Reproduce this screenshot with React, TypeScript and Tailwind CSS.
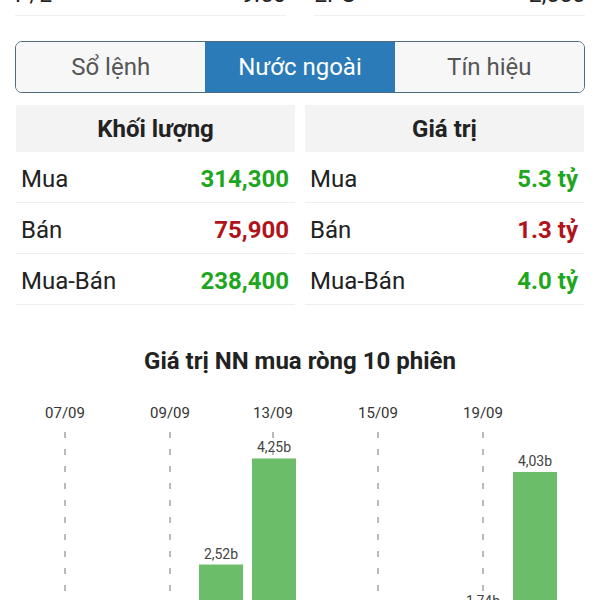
const rows = [
  { label: "Mua", vol: "314,300", val: "5.3 tỷ", color: "text-[#1ea71e]" },
  { label: "Bán", vol: "75,900", val: "1.3 tỷ", color: "text-[#b0141a]" },
  { label: "Mua-Bán", vol: "238,400", val: "4.0 tỷ", color: "text-[#1ea71e]" },
];

// 10 phiên, chỉ vài cột nhìn thấy trong khung
const bars = [
  { x: 65, v: 0 },
  { x: 117, v: 0 },
  { x: 169, v: 0 },
  { x: 221, v: 2.52 },
  { x: 274, v: 4.25 },
  { x: 326, v: 0 },
  { x: 378, v: 0 },
  { x: 430, v: 0 },
  { x: 483, v: 1.74 },
  { x: 535, v: 4.03 },
];

const dates = [
  { x: 65, d: "07/09" },
  { x: 170, d: "09/09" },
  { x: 273, d: "13/09" },
  { x: 378, d: "15/09" },
  { x: 483, d: "19/09" },
];

function Chart() {
  const top = 376;
  const base = 719 - top;
  const k = 61.3;
  return (
    <svg width="600" height="224" className="block" style={{ fontFamily: "Roboto, sans-serif" }}>
      {dates.map((d) => (
        <g key={d.d}>
          <text x={d.x} y={42} textAnchor="middle" fontSize="15" fill="#333">
            {d.d}
          </text>
          <line x1={d.x} x2={d.x} y1={56} y2={224} stroke="#777" strokeWidth="1" strokeDasharray="6 11" />
        </g>
      ))}
      {bars
        .filter((b) => b.v > 0)
        .map((b) => {
          const y = base - b.v * k;
          return (
            <g key={b.x}>
              <rect x={b.x - 22} y={y} width={44} height={300} fill="#6cbd69" />
              <text x={b.x} y={y - 6} textAnchor="middle" fontSize="14" fill="#444">
                {b.v.toFixed(2).replace(".", ",")}b
              </text>
            </g>
          );
        })}
    </svg>
  );
}

export default function App() {
  return (
    <div className="h-[600px] overflow-hidden bg-white font-['Roboto',sans-serif]">
      <div className="flex gap-[28px] px-[15px] -mt-[30px]">
        <div className="flex-1 flex justify-between items-center h-[46px] pt-[6px] border-b border-[#efefef] text-[23px] text-[#222]">
          <span>P/E</span>
          <span>9.50</span>
        </div>
        <div className="flex-1 flex justify-between items-center h-[46px] pt-[6px] border-b border-[#efefef] text-[23px] text-[#222]">
          <span>EPS</span>
          <span>2,555</span>
        </div>
      </div>

      <div className="mx-[15px] mt-[25px] flex h-[52px] rounded-[7px] border border-[#4f6b7e] overflow-hidden text-[24px]">
        <div className="flex-1 flex items-center justify-center bg-[#f7f7f7] text-[#555]">Sổ lệnh</div>
        <div className="flex-1 flex items-center justify-center bg-[#2a7bb7] text-white">Nước ngoài</div>
        <div className="flex-1 flex items-center justify-center bg-[#f7f7f7] text-[#555]">Tín hiệu</div>
      </div>

      <div className="mt-[12px] px-[16px] grid grid-cols-2 gap-[10px]">
        <div>
          <div className="h-[47px] flex items-center justify-center bg-[#f3f3f3] text-[24px] font-bold text-[#222]">
            Khối lượng
          </div>
          {rows.map((r) => (
            <div key={r.label} className="h-[51px] flex items-center justify-between pl-[5px] pr-[6px] pt-[3px] border-b border-[#eeeeee] text-[24px]">
              <span className="text-[#222]">{r.label}</span>
              <span className={`font-bold ${r.color}`}>{r.vol}</span>
            </div>
          ))}
        </div>
        <div>
          <div className="h-[47px] flex items-center justify-center bg-[#f3f3f3] text-[24px] font-bold text-[#222]">
            Giá trị
          </div>
          {rows.map((r) => (
            <div key={r.label} className="h-[51px] flex items-center justify-between pl-[5px] pr-[6px] pt-[3px] border-b border-[#eeeeee] text-[24px]">
              <span className="text-[#222]">{r.label}</span>
              <span className={`font-bold ${r.color}`}>{r.val}</span>
            </div>
          ))}
        </div>
      </div>

      <div className="mt-[41px] text-center text-[24px] leading-[30px] font-bold text-[#222]">
        Giá trị NN mua ròng 10 phiên
      </div>
      <Chart />
    </div>
  );
}
